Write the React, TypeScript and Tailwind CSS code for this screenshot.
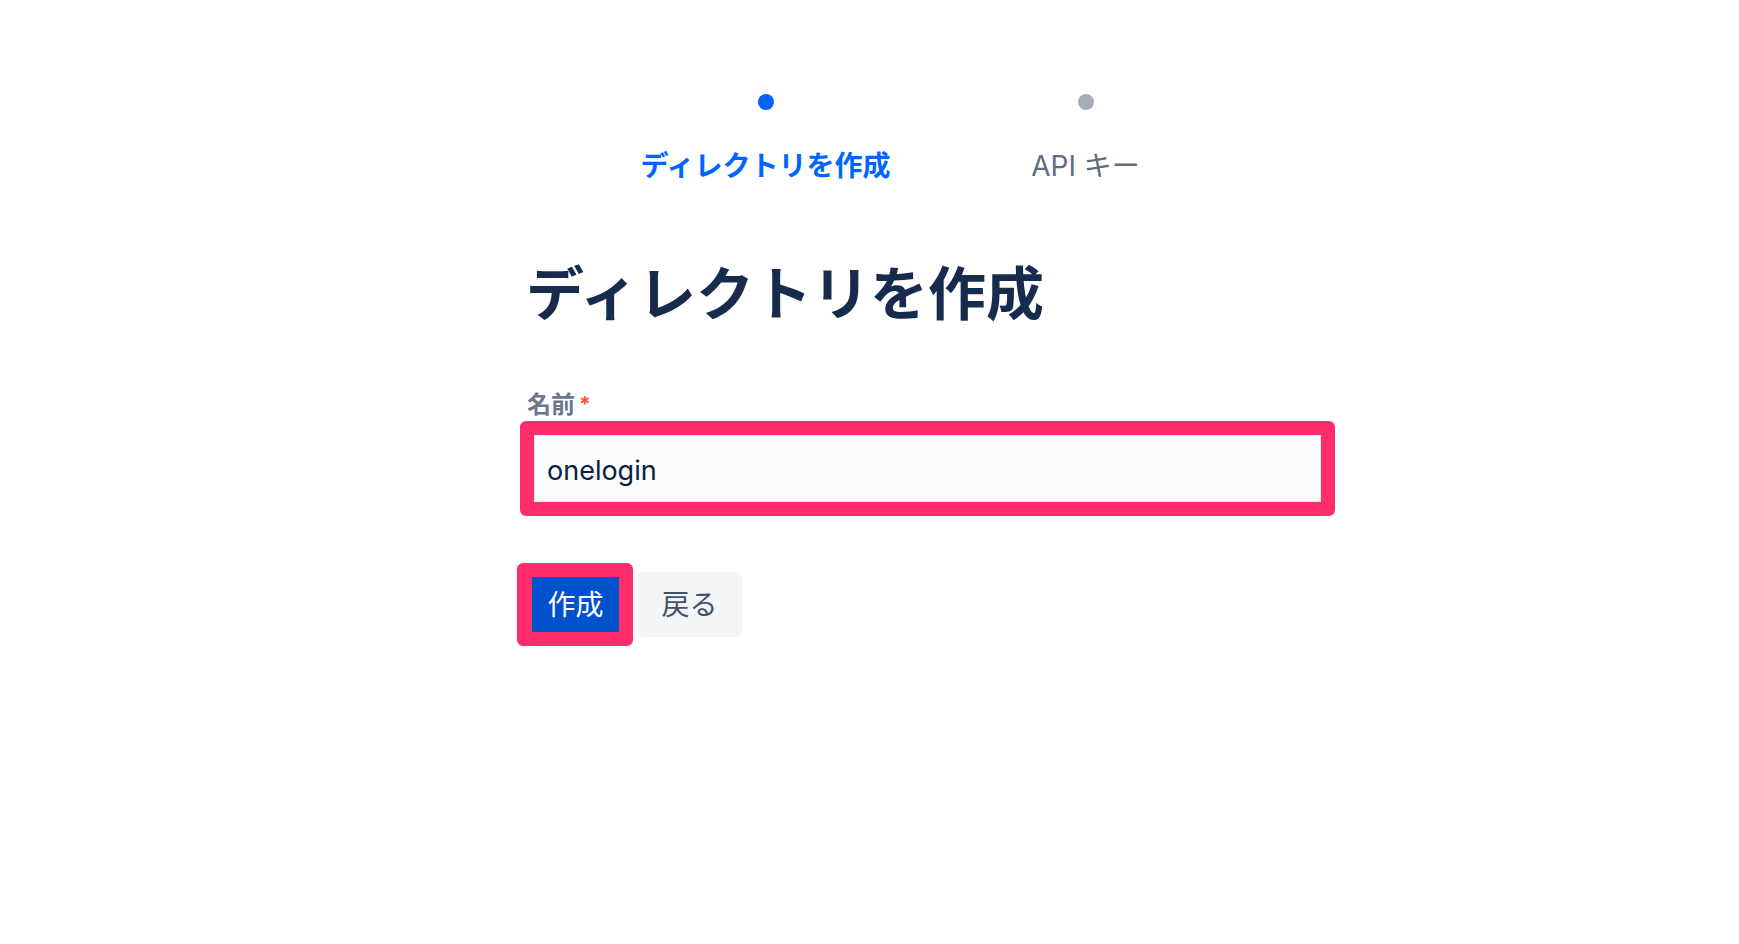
const FONT = "font-['Inter','Noto_Sans_CJK_JP',sans-serif]"

const steps = [
  { label: "ディレクトリを作成", active: true },
  { label: "API キー", active: false },
]

function Steps() {
  return (
    <div className="mr-[4px] grid w-[640px] grid-cols-2 self-center">
      {steps.map((s) => (
        <div key={s.label} className="flex flex-col items-center">
          <span
            className={
              s.active
                ? "h-4 w-4 rounded-full bg-[#0065ff]"
                : "h-4 w-4 rounded-full bg-[#a5adba]"
            }
          />
          <span
            className={
              s.active
                ? "mt-[39px] text-[28px] leading-[34px] font-bold text-[#0065ff]"
                : "mt-[39px] text-[28px] leading-[34px] text-[#5e6c84]"
            }
          >
            {s.label}
          </span>
        </div>
      ))}
    </div>
  )
}

export default function App() {
  return (
    <div className={`min-h-[944px] bg-white ${FONT}`}>
      <div className="flex justify-center pl-[116px] pt-[94px]">
        <div className="flex w-[815px] flex-col">
          <Steps />

          <h1 className="mt-[79px] pl-[6px] text-[58px] leading-[64px] font-bold text-[#172b4d]">
            ディレクトリを作成
          </h1>

          <label className="mt-[64px] flex items-start gap-[4px] pl-[7px] text-[24px] leading-[30px] font-bold text-[#6b778c]">
            名前
            <span className="text-[21px] text-[#ff5630]">*</span>
          </label>

          <div className="mt-[1px] rounded-md border-[14px] border-[#ff2d6b]">
            <input
              readOnly
              value="onelogin"
              className="h-[67px] w-full border border-[#e4e6ea] bg-[#fafbfc] px-[12px] pt-[3px] text-[27px] text-[#091e42] outline-none"
            />
          </div>

          <div className="mt-[47px] -ml-[3px] flex items-center gap-[4px]">
            <div className="rounded-md border-[14px] border-l-[15px] border-[#ff2d6b]">
              <button className="flex h-[55px] w-[87px] items-center justify-center bg-[#0052cc] text-[28px] text-white">
                作成
              </button>
            </div>
            <button className="flex h-[65px] w-[105px] items-center justify-center rounded-md bg-[#f4f5f7] text-[28px] text-[#42526e]">
              戻る
            </button>
          </div>
        </div>
      </div>
    </div>
  )
}
